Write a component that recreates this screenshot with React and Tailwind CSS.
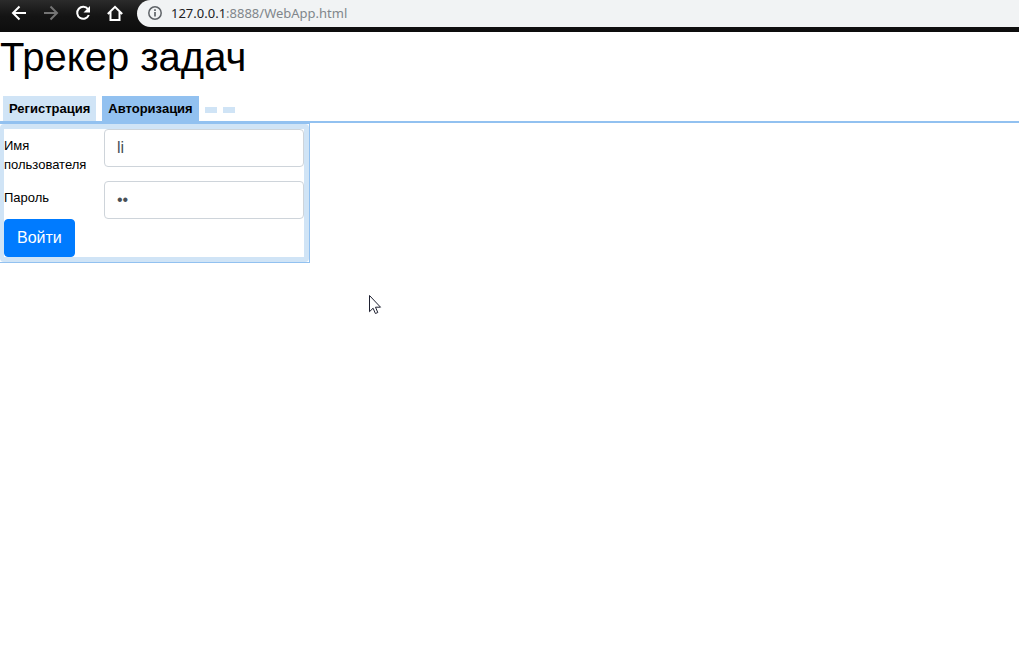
import { useState } from "react";

function ToolButton({ label, muted, children }) {
  return (
    <button
      type="button"
      aria-label={label}
      className={`flex size-4 items-center justify-center ${muted ? "text-[#747474]" : "text-white"}`}
    >
      <svg viewBox="0 0 16 16" className="size-4" fill="none" stroke="currentColor" strokeWidth="2">
        {children}
      </svg>
    </button>
  );
}

function BrowserBar() {
  return (
    <header className="flex h-8 items-start bg-linear-to-b from-[#2b2b2b] via-[#141414] to-[#0d0d0d] pl-[11px]">
      <nav className="flex h-[26px] items-center gap-4 pr-3.5">
        <ToolButton label="Назад">
          <path d="M15 8H2.500M8.500 1.500 2 8l6.500 6.500" />
        </ToolButton>
        <ToolButton label="Вперёд" muted>
          <path d="M1 8h12.500M7.500 1.500 14 8l-6.500 6.500" />
        </ToolButton>
        <ToolButton label="Обновить">
          <path d="M13 4.200A6 6 0 1 0 13.800 10" />
          <path d="M15 1v6.500H8.500z" fill="currentColor" stroke="none" />
        </ToolButton>
        <ToolButton label="Домашняя страница">
          <path d="M.8 9 8 1.800 15.200 9M3.500 7v8h9V7" />
        </ToolButton>
      </nav>
      <div className="flex h-[27px] flex-1 items-start gap-[9px] rounded-l-full bg-[#f1f3f4] pt-[3px] pl-[11px]">
        <svg viewBox="0 0 14 14" className="mt-[3px] size-3.5 shrink-0" fill="none" stroke="#5f6368" strokeWidth="1.5">
          <circle cx="7" cy="7" r="6.200" />
          <path d="M7 6v4.500M7 3.300V5" strokeWidth="1.700" />
        </svg>
        <p className="font-['Noto_Sans','Open_Sans',sans-serif] text-[13px] leading-5 text-[#80868b]">
          <span className="text-[#202124]">127.0.0.1</span>:8888/WebApp.html
        </p>
      </div>
    </header>
  );
}

function Tab({ selected, children, onClick }) {
  return (
    <button
      type="button"
      role="tab"
      aria-selected={selected}
      onClick={onClick}
      className={`h-[25px] px-1.5 text-[13px] leading-5 font-bold ${selected ? "bg-[#92c1f0]" : "bg-[#d0e4f6]"}`}
    >
      {children}
    </button>
  );
}

function Field({ id, label, type, value, onChange }) {
  return (
    <div className="flex">
      <label htmlFor={id} className="w-[100px] pt-[7px] text-[13px] leading-[19px]">
        {label}
      </label>
      <input
        id={id}
        type={type}
        value={value}
        onChange={onChange}
        className="h-[38px] w-[200px] rounded border border-[#ced4da] bg-white px-3 text-base text-[#495057] outline-none"
      />
    </div>
  );
}

export default function App() {
  const [tab, setTab] = useState("login");
  const [name, setName] = useState("li");
  const [password, setPassword] = useState("li");

  return (
    <div className="min-h-screen bg-white font-['Liberation_Sans',Arial,sans-serif] text-black">
      <BrowserBar />
      <main>
        <h1 className="mb-3.5 text-[40px] leading-[50px]">Трекер задач</h1>
        <div role="tablist" className="flex items-start gap-1.5 border-b-2 border-[#92c1f0] pl-[3px]">
          <Tab selected={tab === "register"} onClick={() => setTab("register")}>
            Регистрация
          </Tab>
          <Tab selected={tab === "login"} onClick={() => setTab("login")}>
            Авторизация
          </Tab>
          <span className="mt-[11px] h-1.5 w-3 bg-[#d0e4f6]" />
          <span className="mt-[11px] h-1.5 w-3 bg-[#d0e4f6]" />
        </div>
        <section className="w-[310px] border-y border-r border-[#92c1f0]">
          <div className="rounded bg-[#d0e4f6] py-[5px] pr-[5px] pl-1">
            <form onSubmit={(event) => event.preventDefault()} className="bg-white">
              <div className="flex flex-col gap-[7px]">
                <Field
                  id="username"
                  label="Имя пользователя"
                  type="text"
                  value={name}
                  onChange={(event) => setName(event.target.value)}
                />
                <Field
                  id="password"
                  label="Пароль"
                  type="password"
                  value={password}
                  onChange={(event) => setPassword(event.target.value)}
                />
              </div>
              <button
                type="submit"
                className="h-[38px] rounded border border-[#007bff] bg-[#007bff] px-3 text-base text-white"
              >
                Войти
              </button>
            </form>
          </div>
        </section>
      </main>
      <svg
        aria-hidden="true"
        viewBox="0 0 13 20"
        className="pointer-events-none absolute top-[295px] left-[369px] h-5 w-[13px]"
        fill="#fff"
        stroke="#1e2030"
        strokeWidth="1"
      >
        <path d="M.5.500v16.200l3.600-3.500 2.300 5.300 2.400-1-2.300-5.300h5z" />
      </svg>
    </div>
  );
}
